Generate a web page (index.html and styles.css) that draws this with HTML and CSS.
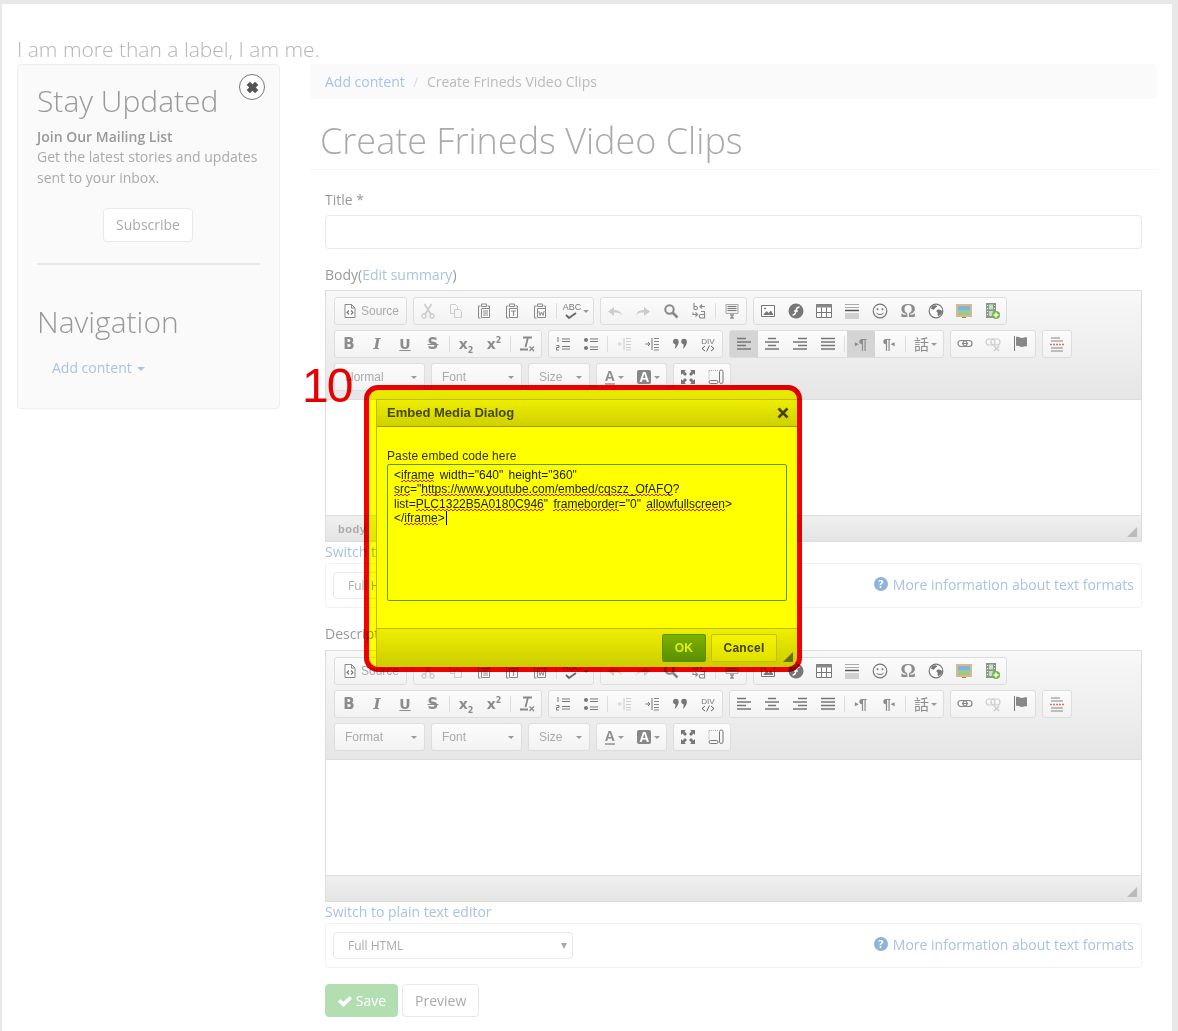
FILE: index.html
```html
<!DOCTYPE html>
<html>
  <head>
    <title>Create Frineds Video Clips</title>
    <link rel="stylesheet" href="styles.css">
  </head>

  <body>
    <svg class="icon-defs" xmlns="http://www.w3.org/2000/svg">
      <symbol id="i-source" viewBox="0 0 16 16"><path d="M3 1.500h6.500L13 5v9.500H3z" fill="#fff" stroke="#888"/><path d="M9.500 1.500V5H13" fill="none" stroke="#888"/><path d="M7 7.500 5 9.500l2 2M9 7.500l2 2-2 2" fill="none" stroke="#777" stroke-width="1.200"/></symbol>
      <symbol id="i-cut" viewBox="0 0 16 16"><circle cx="4" cy="13" r="2" fill="none" stroke="currentColor" stroke-width="1.300"/><circle cx="12" cy="13" r="2" fill="none" stroke="currentColor" stroke-width="1.300"/><path d="M5 11.500 11.500 1M11 11.500 4.500 1" fill="none" stroke="currentColor" stroke-width="1.600"/></symbol>
      <symbol id="i-copy" viewBox="0 0 16 16"><path d="M2.500 1.500h5l2 2v3M2.500 1.500v9h4M6.500 6.500h5l2 2v6h-7z" fill="none" stroke="currentColor"/></symbol>
      <symbol id="i-paste" viewBox="0 0 16 16"><path d="M4.500 3H2.500v12h2M11.500 3h2v2" fill="none" stroke="currentColor"/><path d="M5.500 1h5v2.500h-5z" fill="none" stroke="currentColor"/><path d="M5.500 5.500h8v9h-8z" fill="#fff" stroke="currentColor"/><path d="M7 8h5M7 10h5M7 12h5" stroke="currentColor"/></symbol>
      <symbol id="i-paste-t" viewBox="0 0 16 16"><path d="M4.500 3H2.500v12h2M11.500 3h2v2" fill="none" stroke="currentColor"/><path d="M5.500 1h5v2.500h-5z" fill="none" stroke="currentColor"/><path d="M5.500 5.500h8v9h-8z" fill="#fff" stroke="currentColor"/><path d="M7 8h5M9.500 8v5" stroke="currentColor" stroke-width="1.200"/></symbol>
      <symbol id="i-paste-w" viewBox="0 0 16 16"><path d="M4.500 3H2.500v12h2M11.500 3h2v2" fill="none" stroke="currentColor"/><path d="M5.500 1h5v2.500h-5z" fill="none" stroke="currentColor"/><path d="M5.500 5.500h8v9h-8z" fill="#fff" stroke="currentColor"/><path d="m6.800 8 1.200 4.500L9.500 9l1.500 3.500L12.200 8" fill="none" stroke="currentColor"/></symbol>
      <symbol id="i-undo" viewBox="0 0 16 16"><path d="M1 8.500 7 4v3c4 0 7 1.500 8 5-2-2-4.500-2.500-8-2.500V13z" fill="currentColor"/></symbol>
      <symbol id="i-redo" viewBox="0 0 16 16"><path d="M15 8.500 9 4v3c-4 0-7 1.500-8 5 2-2 4.500-2.500 8-2.500V13z" fill="currentColor"/></symbol>
      <symbol id="i-find" viewBox="0 0 16 16"><circle cx="6.500" cy="6.500" r="4.200" fill="none" stroke="currentColor" stroke-width="2"/><path d="m9.500 9.500 5 5" stroke="currentColor" stroke-width="2.600"/></symbol>
      <symbol id="i-replace" viewBox="0 0 16 16"><path d="M3 0v6.500M3 3.500h2a1.500 1.500 0 0 1 0 3H3M9 3.500h5M11 1.500l-2 2 2 2M2 9.500v2h4M4.500 9.500l2 2-2 2M10 8.500h3.500v6.500H10a1.500 1.500 0 0 1 0-3.500h3.500" fill="none" stroke="currentColor" stroke-width="1.100"/></symbol>
      <symbol id="i-selectall" viewBox="0 0 16 16"><path d="M2 1.500h12v9H2z" fill="#eee" stroke="#aaa"/><path d="M3.500 3.500h9M3.500 5.500h9M3.500 7.500h9" stroke="#777"/><path d="M6 12h4M8 12v3M6 15h4" stroke="#666"/></symbol>
      <symbol id="i-image" viewBox="0 0 16 16"><path d="M1.500 2.500h13v11h-13z" fill="#fff" stroke="#777"/><path d="m3 12 3.500-4 2 2 2.500-2.500L13.500 12z" fill="#777"/><circle cx="5" cy="5.500" r="1" fill="#777"/></symbol>
      <symbol id="i-flash" viewBox="0 0 16 16"><circle cx="8" cy="8" r="7.500" fill="#777"/><path d="M4.500 12c3 0 3-2 3.500-4.500S9 4 11.500 4" fill="none" stroke="#fff" stroke-width="1.500"/><path d="M6 8h4" stroke="#fff" stroke-width="1.300"/></symbol>
      <symbol id="i-table" viewBox="0 0 16 16"><path d="M.5 1.500h15v13H.500z" fill="#fff" stroke="#777"/><path d="M.5 1.500h15v3H.5z" fill="#888"/><path d="M.5 9.500h15M5.500 4.500v10M10.500 4.500v10" stroke="#777"/></symbol>
      <symbol id="i-hr" viewBox="0 0 16 16"><path d="M1 1.500h14M1 4.500h14M1 11h14M1 13h14M1 15h14" stroke="#aaa"/><path d="M1 7.500h14" stroke="#555" stroke-width="1.500"/></symbol>
      <symbol id="i-smiley" viewBox="0 0 16 16"><circle cx="8" cy="8" r="6.800" fill="none" stroke="#777" stroke-width="1.200"/><circle cx="5.500" cy="6.300" r="1" fill="#777"/><circle cx="10.500" cy="6.300" r="1" fill="#777"/><path d="M4.500 10c1.500 2 5.500 2 7 0" fill="none" stroke="#777"/></symbol>
      <symbol id="i-globe" viewBox="0 0 16 16"><circle cx="8" cy="8" r="6.800" fill="#fff" stroke="#777" stroke-width="1.200"/><path d="M4 3c2-1 4.500-1 5 0s-2 1.500-2.500 3-2.500 0-3.500 0zM9 7c2-1 4 0 5 1s-2 5-3.500 5-.5-3-1-3.500S7.500 8 9 7z" fill="#777"/></symbol>
      <symbol id="i-embed" viewBox="0 0 16 16"><path d="M0 1h16v13H0z" fill="#d6b98c"/><path d="M2 3h12v9H2z" fill="#8fc7b5"/><path d="M2 3h12v4H2z" fill="#7fb5d8"/><path d="m2 12 5-4 7 4z" fill="#a8c96a"/><path d="M6 14h4v1H6z" fill="#9a8460"/></symbol>
      <symbol id="i-film" viewBox="0 0 16 16"><path d="M2 0h10v15H2z" fill="#889a88"/><path d="M5 1.500h4v5H5zM5 8h4v5H5z" fill="#c8dcc8"/><path d="M3 2h1v1H3zM3 5h1v1H3zM3 8h1v1H3zM3 11h1v1H3zM10 2h1v1h-1zM10 5h1v1h-1z" fill="#fff"/><circle cx="12" cy="12" r="4" fill="#74b84a"/><path d="M12 9.500v5M9.500 12h5" stroke="#fff" stroke-width="1.500"/></symbol>
      <symbol id="i-clear" viewBox="0 0 16 16"><path d="M4 1.500h9M9 1.500 6.500 11M1 13.500h8" fill="none" stroke="#888" stroke-width="1.800"/><path d="m10.500 10.500 4.500 4.500M15 10.500 10.500 15" stroke="#888" stroke-width="1.300"/></symbol>
      <symbol id="i-ol" viewBox="0 0 16 16"><path d="M7 3h8M7 5.500h8M7 10.500h8M7 13h8" stroke="#777"/><path d="M3 1v5M1.500 9.500H4V11.500H1.500V14H4" fill="none" stroke="#777"/></symbol>
      <symbol id="i-ul" viewBox="0 0 16 16"><circle cx="3" cy="4" r="2" fill="#777"/><circle cx="3" cy="12" r="2" fill="#777"/><path d="M7 3h8M7 5.500h8M7 11h8M7 13.500h8" stroke="#777"/></symbol>
      <symbol id="i-outdent" viewBox="0 0 16 16"><path d="M8 2v12" stroke="#ccc"/><path d="M10 2.500h5M10 5.500h5M10 8.500h5M10 11.500h5M10 14h5" stroke="#ccc"/><path d="M6.500 8H2M4 6 2 8l2 2" fill="none" stroke="#ccc"/></symbol>
      <symbol id="i-indent" viewBox="0 0 16 16"><path d="M8 2v12" stroke="#777"/><path d="M10 2.500h5M10 5.500h5M10 8.500h5M10 11.500h5M10 14h5" stroke="#888"/><path d="M1.500 8H6M4 6l2 2-2 2" fill="none" stroke="#777"/></symbol>
      <symbol id="i-quote" viewBox="0 0 16 16"><circle cx="3.800" cy="5.500" r="2.800" fill="#777"/><circle cx="12" cy="5.500" r="2.800" fill="#777"/><path d="M6.600 5.500c0 3-1.500 5.500-4 7.500 1-2.500 1-4 .5-5zM14.800 5.500c0 3-1.500 5.500-4 7.500 1-2.500 1-4 .5-5z" fill="#777"/></symbol>
      <symbol id="i-div" viewBox="0 0 16 16"><path d="M5 10 2 12.500 5 15M11 10l3 2.500-3 2.500M9.500 9.500l-3 6" fill="none" stroke="#666"/><text x="8" y="7.500" text-anchor="middle" font-family="Liberation Sans" font-size="8" fill="#777">DIV</text></symbol>
      <symbol id="i-left" viewBox="0 0 16 16"><path d="M1 2.500h9M1 6h14M1 9.500h9M1 13h14" stroke="#777" stroke-width="1.500"/></symbol>
      <symbol id="i-center" viewBox="0 0 16 16"><path d="M4 2.500h8M1 6h14M4 9.500h8M1 13h14" stroke="#777" stroke-width="1.500"/></symbol>
      <symbol id="i-right" viewBox="0 0 16 16"><path d="M6 2.500h9M1 6h14M6 9.500h9M1 13h14" stroke="#777" stroke-width="1.500"/></symbol>
      <symbol id="i-justify" viewBox="0 0 16 16"><path d="M1 2.500h14M1 6h14M1 9.500h14M1 13h14" stroke="#777" stroke-width="1.500"/></symbol>
      <symbol id="i-link" viewBox="0 0 16 16"><rect x="1" y="4.500" width="9" height="6" rx="3" fill="none" stroke="#888" stroke-width="1.200"/><rect x="6" y="4.500" width="9" height="6" rx="3" fill="none" stroke="#888" stroke-width="1.200"/><path d="M5 7.500h6" stroke="#888"/></symbol>
      <symbol id="i-unlink" viewBox="0 0 16 16"><rect x="1" y="3" width="9" height="6" rx="3" fill="none" stroke="#ccc" stroke-width="1.200"/><rect x="6" y="3" width="9" height="6" rx="3" fill="none" stroke="#ccc" stroke-width="1.200"/><path d="m9 10 5 5M14 10l-5 5" stroke="#ccc" stroke-width="1.300"/></symbol>
      <symbol id="i-flag" viewBox="0 0 16 16"><path d="M1.500 0v15" stroke="#777"/><path d="M3 1c3-1 4 1 6 1s3-1 5-.5v9c-2-.5-3 .5-5 .5s-3-2-6-1z" fill="#888"/></symbol>
      <symbol id="i-break" viewBox="0 0 16 16"><path d="M2 2h9M2 5h12M2 12h12M2 15h12" stroke="#aaa" stroke-width="1.500"/><path d="M1 8.500h14" stroke="#e07070" stroke-width="1.500" stroke-dasharray="2 1"/></symbol>
      <symbol id="i-maximize" viewBox="0 0 16 16"><path d="M1 1h5L4.500 2.500 7 5 5 7 2.500 4.500 1 6zM15 1v5l-1.500-1.500L11 7 9 5l2.500-2.500L10 1zM1 15v-5l1.500 1.500L5 9l2 2-2.500 2.500L6 15zM15 15h-5l1.500-1.500L9 11l2-2 2.500 2.500L15 10z" fill="#777"/></symbol>
      <symbol id="i-blocks" viewBox="0 0 16 16"><path d="M1 1.500h9M1 1.500v9" stroke="#aaa" stroke-dasharray="1 1"/><rect x="1" y="11.500" width="9" height="3" rx="1.500" fill="none" stroke="#777"/><rect x="11.500" y="1" width="3.500" height="13.500" rx="1.700" fill="none" stroke="#777"/></symbol>
    </svg>

    <div class="page">
      <div class="site-label">I am more than a label, I am me.</div>

      <div class="columns">
        <aside class="sidebar">
          <button class="close-btn" type="button" aria-label="Close">
            <svg width="13" height="13" viewBox="3 3 10 10"><path d="M3.500 6 6 3.500l2 2 2-2L12.500 6l-2 2 2 2-2.500 2.500-2-2-2 2L3.500 10l2-2z" fill="#555"/></svg>
          </button>
          <h2>Stay Updated</h2>
          <p class="join">Join Our Mailing List</p>
          <p class="blurb">Get the latest stories and updates sent to your inbox.</p>
          <div class="wrap"><a class="btn subscribe" href="#">Subscribe</a></div>
          <hr />
          <h2>Navigation</h2>
          <a class="nav-link" href="#">Add content <span class="caret"></span></a>
        </aside>

        <main class="content">
          <div class="breadcrumb">
            <a href="#">Add content</a>
            <span class="slash">/</span>
            <span>Create Frineds Video Clips</span>
          </div>
          <h1>Create Frineds Video Clips</h1>

          <form class="node-form">
            <label class="field-label">Title *</label>
            <input class="text-input" type="text" />

            <label class="field-label">Body(<a href="#">Edit summary</a>)</label>
            <div class="editor editor-active" data-format="Normal" data-path="body"></div>
            <a class="switch-link" href="#">Switch to plain text editor</a>
            <div class="filter-box">
              <div class="select">Full HTML<span class="select-arrow"></span></div>
              <a class="help-link" href="#"><span class="help-icon">?</span>More information about text formats</a>
            </div>

            <label class="field-label">Description</label>
            <div class="editor" data-format="Format" data-path=""></div>
            <a class="switch-link" href="#">Switch to plain text editor</a>
            <div class="filter-box">
              <div class="select">Full HTML<span class="select-arrow"></span></div>
              <a class="help-link" href="#"><span class="help-icon">?</span>More information about text formats</a>
            </div>

            <div class="actions">
              <a class="btn btn-save" href="#">
                <svg width="16" height="16" viewBox="0 0 16 16"><path d="M1 8.500 3.500 6 6.500 9l6-6L15 5.500 6.500 14z" fill="#fff"/></svg>
                Save
              </a>
              <a class="btn" href="#">Preview</a>
            </div>
          </form>
        </main>
      </div>

      <div class="step-number">10</div>

      <div class="dialog">
        <div class="dialog-title">
          <span>Embed Media Dialog</span>
          <svg width="12" height="12" viewBox="0 0 12 12"><path d="M1.500 1.500l9 9M10.500 1.500l-9 9" stroke="#444" stroke-width="2.600"/></svg>
        </div>
        <div class="dialog-body">
          <div class="dialog-label">Paste embed code here</div>
          <div class="code-box">
            &lt;<span class="typo">iframe</span> width="640" height="360"<br />
            <span class="typo">src</span>="<span class="typo">https://www.youtube.com/embed/cqszz_OfAFQ</span>?<br />
            list=<span class="typo">PLC1322B5A0180C946</span>" <span class="typo">frameborder</span>="0" <span class="typo">allowfullscreen</span>&gt;<br />
            &lt;/<span class="typo">iframe</span>&gt;<span class="caret-bar"></span>
          </div>
        </div>
        <div class="dialog-footer">
          <a class="dlg-btn dlg-ok" href="#">OK</a>
          <a class="dlg-btn dlg-cancel" href="#">Cancel</a>
          <span class="dlg-resizer"></span>
        </div>
      </div>

      <!-- highlighter box drawn on the screenshot: tints whatever lies under it -->
      <div class="highlight"></div>
    </div>

    <template id="editor-tpl">
      <div class="toolbar">
        <div class="tb-row">
          <div class="tb-group"><a class="tb-btn tb-source"><svg class="ic"><use href="#i-source"/></svg><span>Source</span></a></div>
          <div class="tb-group off">
            <a class="tb-btn"><svg class="ic"><use href="#i-cut"/></svg></a>
            <a class="tb-btn"><svg class="ic"><use href="#i-copy"/></svg></a>
            <a class="tb-btn on"><svg class="ic"><use href="#i-paste"/></svg></a>
            <a class="tb-btn on"><svg class="ic"><use href="#i-paste-t"/></svg></a>
            <a class="tb-btn on"><svg class="ic"><use href="#i-paste-w"/></svg></a>
            <i class="tb-sep"></i>
            <a class="tb-btn tb-drop on"><span class="abc">ABC<svg width="14" height="7" viewBox="0 0 14 7"><path d="m1 3 3 3 7-5" fill="none" stroke="#666" stroke-width="1.800"/></svg></span><b class="mini-arrow"></b></a>
          </div>
          <div class="tb-group off">
            <a class="tb-btn"><svg class="ic"><use href="#i-undo"/></svg></a>
            <a class="tb-btn"><svg class="ic"><use href="#i-redo"/></svg></a>
            <a class="tb-btn on"><svg class="ic"><use href="#i-find"/></svg></a>
            <a class="tb-btn on"><svg class="ic"><use href="#i-replace"/></svg></a>
            <i class="tb-sep"></i>
            <a class="tb-btn"><svg class="ic"><use href="#i-selectall"/></svg></a>
          </div>
          <div class="tb-group">
            <a class="tb-btn"><svg class="ic"><use href="#i-image"/></svg></a>
            <a class="tb-btn"><svg class="ic"><use href="#i-flash"/></svg></a>
            <a class="tb-btn"><svg class="ic"><use href="#i-table"/></svg></a>
            <a class="tb-btn"><svg class="ic"><use href="#i-hr"/></svg></a>
            <a class="tb-btn"><svg class="ic"><use href="#i-smiley"/></svg></a>
            <a class="tb-btn tb-glyph tb-omega">Ω</a>
            <a class="tb-btn"><svg class="ic"><use href="#i-globe"/></svg></a>
            <a class="tb-btn"><svg class="ic"><use href="#i-embed"/></svg></a>
            <a class="tb-btn"><svg class="ic"><use href="#i-film"/></svg></a>
          </div>
        </div>

        <div class="tb-row">
          <div class="tb-group">
            <a class="tb-btn tb-glyph tb-bold">B</a>
            <a class="tb-btn tb-glyph tb-italic">I</a>
            <a class="tb-btn tb-glyph tb-under">U</a>
            <a class="tb-btn tb-glyph tb-strike">S</a>
            <i class="tb-sep"></i>
            <a class="tb-btn tb-glyph tb-script"><span>x<sub>2</sub></span></a>
            <a class="tb-btn tb-glyph tb-script"><span>x<sup>2</sup></span></a>
            <i class="tb-sep"></i>
            <a class="tb-btn"><svg class="ic"><use href="#i-clear"/></svg></a>
          </div>
          <div class="tb-group">
            <a class="tb-btn"><svg class="ic"><use href="#i-ol"/></svg></a>
            <a class="tb-btn"><svg class="ic"><use href="#i-ul"/></svg></a>
            <i class="tb-sep"></i>
            <a class="tb-btn"><svg class="ic"><use href="#i-outdent"/></svg></a>
            <a class="tb-btn"><svg class="ic"><use href="#i-indent"/></svg></a>
            <a class="tb-btn"><svg class="ic"><use href="#i-quote"/></svg></a>
            <a class="tb-btn"><svg class="ic"><use href="#i-div"/></svg></a>
          </div>
          <div class="tb-group">
            <a class="tb-btn tb-toggle"><svg class="ic"><use href="#i-left"/></svg></a>
            <a class="tb-btn"><svg class="ic"><use href="#i-center"/></svg></a>
            <a class="tb-btn"><svg class="ic"><use href="#i-right"/></svg></a>
            <a class="tb-btn"><svg class="ic"><use href="#i-justify"/></svg></a>
            <i class="tb-sep"></i>
            <a class="tb-btn tb-glyph tb-para tb-toggle"><small>▸</small>¶</a>
            <a class="tb-btn tb-glyph tb-para">¶<small>◂</small></a>
            <i class="tb-sep"></i>
            <a class="tb-btn tb-drop tb-glyph tb-lang">話<b class="mini-arrow"></b></a>
          </div>
          <div class="tb-group">
            <a class="tb-btn"><svg class="ic"><use href="#i-link"/></svg></a>
            <a class="tb-btn"><svg class="ic"><use href="#i-unlink"/></svg></a>
            <a class="tb-btn"><svg class="ic"><use href="#i-flag"/></svg></a>
          </div>
          <div class="tb-group">
            <a class="tb-btn"><svg class="ic"><use href="#i-break"/></svg></a>
          </div>
        </div>

        <div class="tb-row">
          <div class="tb-group tb-combo combo-wide"><span class="combo-format"></span><b class="mini-arrow"></b></div>
          <div class="tb-group tb-combo combo-wide"><span>Font</span><b class="mini-arrow"></b></div>
          <div class="tb-group tb-combo combo-size"><span>Size</span><b class="mini-arrow"></b></div>
          <div class="tb-group">
            <a class="tb-btn tb-color tb-glyph"><span class="color-a">A</span><b class="mini-arrow"></b></a>
            <a class="tb-btn tb-color tb-glyph"><span class="color-bg">A</span><b class="mini-arrow"></b></a>
          </div>
          <div class="tb-group">
            <a class="tb-btn"><svg class="ic"><use href="#i-maximize"/></svg></a>
            <a class="tb-btn"><svg class="ic"><use href="#i-blocks"/></svg></a>
          </div>
        </div>
      </div>
      <div class="editor-area"></div>
      <div class="editor-bottom"><span class="editor-path"></span><span class="editor-resize"></span></div>
    </template>

    <script>
      // both editors share the one CKEditor toolbar markup
      var tpl = document.getElementById("editor-tpl");
      document.querySelectorAll(".editor").forEach(function (editor) {
        var copy = tpl.content.cloneNode(true);
        copy.querySelector(".combo-format").textContent = editor.dataset.format;
        copy.querySelector(".editor-path").textContent = editor.dataset.path;
        editor.appendChild(copy);
      });
    </script>
  </body>
</html>
```

FILE: styles.css
```css
/* page shell */
html {
  background: #e8e8e8;
}

body {
  margin: 4px 6px 0 2px;
  font-family: "Open Sans", sans-serif;
  font-size: 14px;
  line-height: 20px;
  color: #aaa;
}

a {
  color: #a9c3e0;
  text-decoration: none;
}

.icon-defs {
  display: none;
}

.page {
  position: relative;
  background: #fff;
  height: 1027px;
  padding: 31px 15px 0;
  box-sizing: border-box;
  overflow: hidden;
}

.site-label {
  font-size: 21px;
  font-weight: 300;
  line-height: 29px;
  color: #b5b5b5;
}

.columns {
  display: grid;
  grid-template-columns: 263px 847px;
  gap: 30px;
  align-items: start;
}

/* sidebar */
.sidebar {
  position: relative;
  height: 345px;
  box-sizing: border-box;
  padding: 18px 19px 0;
  background: #fafafa;
  border: 1px solid #eee;
  border-radius: 4px;
}

.sidebar h2 {
  margin: 0;
  font-size: 30px;
  font-weight: 300;
  line-height: 36px;
  color: #999;
}

.join {
  margin: 8px 0 0;
  font-weight: 600;
  color: #999;
}

.blurb {
  margin: 0;
  line-height: 20.500px;
  color: #aaa;
}

.wrap {
  display: flex;
  justify-content: center;
  margin-top: 20px;
  padding-right: 1px;
}

.btn {
  display: inline-flex;
  align-items: center;
  justify-content: center;
  box-sizing: border-box;
  height: 34px;
  padding: 0 12px;
  background: #fff;
  border: 1px solid #e8e8e8;
  border-radius: 4px;
  color: #aaa;
}

.subscribe {
  width: 90px;
}

.sidebar hr {
  height: 2px;
  margin: 21px 0 39px;
  border: 0;
  background: #e8e8e8;
}

.nav-link {
  display: block;
  margin: 18px 0 0 15px;
}

.caret {
  display: inline-block;
  margin-left: 2px;
  vertical-align: middle;
  border-top: 4px solid #a9c3e0;
  border-left: 4px solid transparent;
  border-right: 4px solid transparent;
}

.close-btn {
  position: absolute;
  top: 9px;
  right: 14px;
  display: flex;
  align-items: center;
  justify-content: center;
  width: 26px;
  height: 26px;
  padding: 0;
  background: #fff;
  border: 1px solid #777;
  border-radius: 50%;
}

/* main column */
.breadcrumb {
  display: flex;
  gap: 8px;
  height: 35px;
  align-items: center;
  padding: 0 15px;
  background: #fafafa;
  border-radius: 4px;
  color: #bbb;
}

.slash {
  margin: 0 0.500px;
  color: #ddd;
}

h1 {
  margin: 0;
  padding: 20px 10px 6px;
  font-size: 36px;
  font-weight: 300;
  line-height: 44px;
  color: #aaa;
  border-bottom: 1px solid #f5f5f5;
}

.node-form {
  padding: 0 15px;
}

.field-label {
  display: block;
  margin-top: 16px;
  margin-bottom: 5px;
  line-height: 20px;
  color: #999;
}

.field-label:first-child {
  margin-top: 20px;
}

.filter-box + .field-label {
  margin-bottom: 6px;
}

.text-input {
  display: block;
  box-sizing: border-box;
  width: 100%;
  height: 34px;
  background: #fff;
  border: 1px solid #e8e8e8;
  border-radius: 4px;
}

/* editor */
.editor {
  box-sizing: border-box;
  height: 252px;
  border: 1px solid #ddd;
}

.toolbar {
  box-sizing: border-box;
  height: 109px;
  padding: 6px 8px 0;
  background: linear-gradient(#f8f8f8, #e6e6e6);
  border-bottom: 1px solid #ddd;
}

.tb-row {
  display: flex;
  gap: 6px;
  height: 28px;
  margin-bottom: 5px;
}

.tb-group {
  display: flex;
  align-items: stretch;
  background: linear-gradient(#fcfcfc, #f2f2f2);
  border: 1px solid #ddd;
  border-radius: 3px;
  color: #888;
}

.tb-group.off {
  color: #ccc;
}

.tb-btn {
  display: flex;
  align-items: center;
  justify-content: center;
  box-sizing: border-box;
  width: 28px;
  color: inherit;
}

.tb-btn.on {
  color: #888;
}

.tb-sep {
  width: 1px;
  margin: 5px 2px;
  background: #ddd;
}

.ic {
  display: block;
  width: 16px;
  height: 16px;
}

.tb-source {
  width: 71px;
  gap: 3px;
  font-family: "Liberation Sans", Arial, sans-serif;
  font-size: 12px;
  color: #aaa;
}

.tb-drop {
  width: 34px;
  gap: 2px;
}

.abc {
  display: flex;
  flex-direction: column;
  align-items: center;
  font-family: "Liberation Sans", Arial, sans-serif;
  font-size: 9px;
  line-height: 9px;
  color: #777;
}

.mini-arrow {
  display: block;
  flex: none;
  border-top: 3px solid #999;
  border-left: 3px solid transparent;
  border-right: 3px solid transparent;
}

.tb-glyph {
  font-family: "DejaVu Sans", sans-serif;
  color: #8c8c8c;
}

.tb-bold {
  font-size: 15px;
  font-weight: bold;
}

.tb-italic {
  font-family: "DejaVu Serif", serif;
  font-size: 15px;
  font-style: italic;
  font-weight: bold;
}

.tb-under {
  font-size: 14px;
  font-weight: bold;
  text-decoration: underline;
}

.tb-strike {
  font-size: 15px;
  font-weight: bold;
  text-decoration: line-through;
}

.tb-script {
  font-size: 14px;
  font-weight: bold;
}

.tb-script sub,
.tb-script sup {
  font-size: 8px;
  line-height: 0;
}

.tb-omega {
  font-family: "Liberation Serif", serif;
  font-size: 19px;
  font-weight: bold;
}

.tb-para {
  font-family: "Liberation Sans", sans-serif;
  font-size: 15px;
  font-weight: bold;
}

.tb-para small {
  font-size: 7px;
}

.tb-lang {
  width: 35px;
  font-family: "Noto Sans CJK TC", sans-serif;
  font-size: 15px;
}

.editor-active .tb-toggle {
  background: #d4d4d4;
}

.tb-combo {
  justify-content: space-between;
  align-items: center;
  box-sizing: border-box;
  padding: 0 7px 0 10px;
  font-family: "Liberation Sans", Arial, sans-serif;
  font-size: 12px;
  color: #aaa;
}

.combo-wide {
  width: 91px;
}

.combo-size {
  width: 62px;
}

.tb-color {
  width: 34.500px;
  gap: 3px;
  font-family: "Liberation Sans", sans-serif;
  font-size: 14px;
  font-weight: bold;
}

.color-a {
  line-height: 14px;
  border-bottom: 2px solid #aaa;
}

.color-bg {
  width: 14px;
  line-height: 14px;
  text-align: center;
  color: #fff;
  background: #888;
  border-radius: 2px;
}

.editor-area {
  height: 115px;
  background: #fff;
}

.editor-bottom {
  position: relative;
  display: flex;
  align-items: center;
  box-sizing: border-box;
  height: 26px;
  padding: 0 12px;
  background: linear-gradient(#f0f0f0, #e4e4e4);
  border-top: 1px solid #ddd;
  font-family: "Liberation Sans", Arial, sans-serif;
  font-size: 11px;
  font-weight: bold;
  letter-spacing: 0.5px;
  color: #aaa;
}

.editor-resize {
  position: absolute;
  right: 4px;
  bottom: 4px;
  width: 0;
  height: 0;
  border-bottom: 10px solid #bbb;
  border-left: 10px solid transparent;
}

.switch-link {
  display: block;
  height: 21px;
}

.filter-box {
  display: flex;
  align-items: center;
  justify-content: space-between;
  box-sizing: border-box;
  height: 45px;
  padding: 0 7px;
  border: 1px solid #f2f2f2;
  border-radius: 4px;
}

.select {
  position: relative;
  box-sizing: border-box;
  width: 240px;
  height: 27px;
  padding-left: 14px;
  font-size: 12px;
  line-height: 25px;
  color: #aaa;
  border: 1px solid #e8e8e8;
  border-radius: 4px;
}

.select-arrow {
  position: absolute;
  top: 10px;
  right: 5px;
  border-top: 6px solid #aaa;
  border-left: 3px solid transparent;
  border-right: 3px solid transparent;
}

.help-link {
  display: flex;
  align-items: center;
  gap: 5px;
  margin-bottom: 1px;
}

.help-icon {
  display: block;
  width: 14px;
  height: 14px;
  margin-top: -3px;
  font-size: 11px;
  font-weight: bold;
  line-height: 14px;
  text-align: center;
  color: #fff;
  background: #8fb3d9;
  border-radius: 50%;
}

.actions {
  display: flex;
  gap: 4px;
  margin-top: 16px;
}

.actions .btn {
  height: 33px;
}

.btn-save {
  width: 73px;
  gap: 3px;
  color: #fff;
  background: #b2deb2;
  border-color: #b2deb2;
  padding: 0;
}

/* annotation + dialog over the page */
.step-number {
  position: absolute;
  left: 300px;
  top: 352px;
  font-family: "Liberation Sans", Arial, sans-serif;
  font-size: 48px;
  letter-spacing: -2px;
  line-height: 60px;
  color: #e60000;
}

.dialog {
  position: absolute;
  left: 374px;
  top: 395px;
  display: flex;
  flex-direction: column;
  box-sizing: border-box;
  width: 421px;
  height: 268px;
  background: #fff;
  border-left: 1px solid #bbb;
  font-family: "Liberation Sans", Arial, sans-serif;
  font-size: 12px;
  color: #333;
}

.dialog-title {
  display: flex;
  align-items: center;
  justify-content: space-between;
  box-sizing: border-box;
  height: 28px;
  padding: 0 8px 0 10px;
  font-size: 13px;
  font-weight: bold;
  color: #474747;
  background: linear-gradient(#eee, #d0d0d0);
  border-top: 1px solid #bbb;
  border-bottom: 1px solid #999;
}

.dialog-body {
  flex: 1;
  padding: 22px 10px 0;
}

.dialog-label {
  line-height: 15px;
  letter-spacing: 0.100px;
}

.code-box {
  box-sizing: border-box;
  width: 400px;
  height: 137px;
  padding: 3px 6px;
  line-height: 14.300px;
  word-spacing: 2px;
  color: #222;
  border: 1px solid #5a9a20;
  border-radius: 2px;
}

/* spell-check zigzag under the code */
.typo {
  background-image:
    repeating-linear-gradient(90deg, #e02020 0 2px, transparent 2px 4px),
    repeating-linear-gradient(90deg, transparent 0 2px, #e02020 2px 4px);
  background-repeat: no-repeat;
  background-size: 100% 1px;
  background-position: 0 100%, 0 calc(100% - 1px);
}

.caret-bar {
  display: inline-block;
  width: 1px;
  height: 14px;
  margin-left: 1px;
  vertical-align: -3px;
  background: #000;
}

.dialog-footer {
  position: relative;
  display: flex;
  gap: 5px;
  align-items: flex-start;
  box-sizing: border-box;
  height: 39px;
  padding: 5px 20px 0 285px;
  background: linear-gradient(#eee, #ccc);
  border-top: 1px solid #bbb;
}

.dlg-btn {
  display: flex;
  align-items: center;
  justify-content: center;
  box-sizing: border-box;
  height: 28px;
  font-weight: bold;
  letter-spacing: 0.300px;
  border-radius: 2px;
}

.dlg-ok {
  width: 44px;
  color: #e4f0e4;
  background: linear-gradient(#7cb000, #5a9000);
  border: 1px solid #5a9000;
}

.dlg-cancel {
  width: 66px;
  color: #404040;
  background: linear-gradient(#f4f4f4, #e0e0e0);
  border: 1px solid #c0c0c0;
}

.dlg-resizer {
  position: absolute;
  right: 4px;
  bottom: 5px;
  border-bottom: 10px solid #6b6b6b;
  border-left: 10px solid transparent;
}

.highlight {
  position: absolute;
  left: 362px;
  top: 381px;
  box-sizing: border-box;
  width: 438px;
  height: 287px;
  background: #ffff00;
  border: 5px solid #f40000;
  border-radius: 14px;
  mix-blend-mode: multiply;
}
```
